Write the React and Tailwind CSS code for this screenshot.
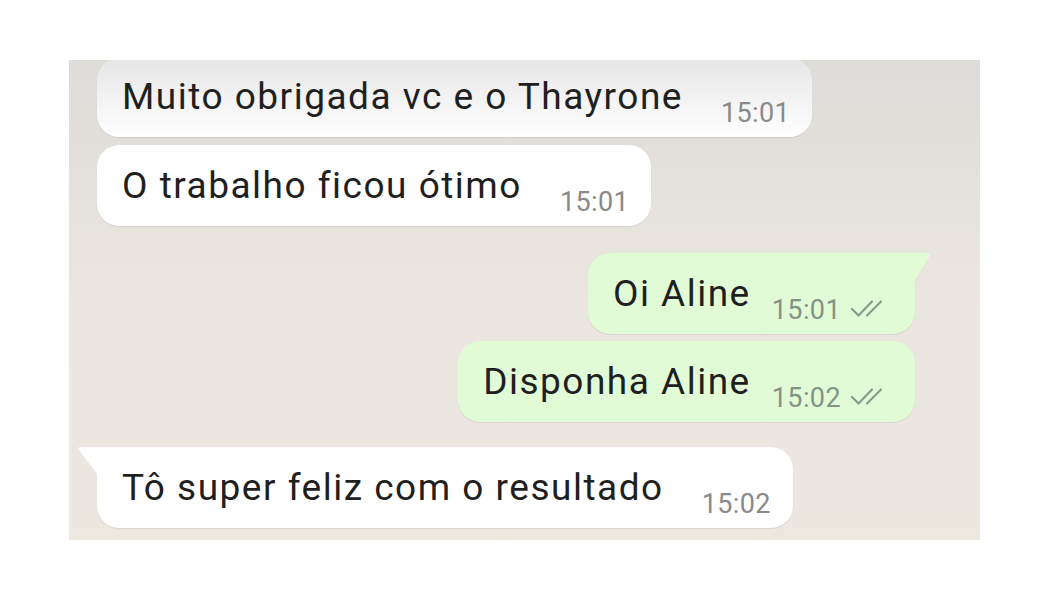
import React from "react";

const messages = [
  { id: 1, text: "Muito obrigada vc e o Thayrone", time: "15:01", out: false, first: true, gap: "-mt-[2px]" },
  { id: 2, text: "O trabalho ficou ótimo", time: "15:01", out: false, gap: "mt-[8px]" },
  { id: 3, text: "Oi Aline", time: "15:01", out: true, tail: true, gap: "mt-[27px]" },
  { id: 4, text: "Disponha Aline", time: "15:02", out: true, gap: "mt-[7px]" },
  { id: 5, text: "Tô super feliz com o resultado", time: "15:02", out: false, tail: true, gap: "mt-[25px]" },
];

function Ticks() {
  return (
    <svg width="40" height="20" viewBox="0 0 40 20" fill="none" className="ml-[9px] mt-[4px]">
      <path d="M2 10 L8.5 16.5 L22 2.5" stroke="#8a998c" strokeWidth="2.2" strokeLinecap="round" strokeLinejoin="round" />
      <path d="M17 16.5 L31 2.5" stroke="#8a998c" strokeWidth="2.2" strokeLinecap="round" />
    </svg>
  );
}

function Bubble({ msg }) {
  if (msg.out) {
    return (
      <div
        className={`relative self-end flex items-start bg-[#e2fbd7] rounded-[22px] pl-[25px] pr-[25px] pt-[21px] pb-[9px] shadow-[0_1px_1px_rgba(0,0,0,0.08)] ${msg.gap} ${
          msg.tail ? "rounded-tr-none" : ""
        }`}
      >
        {msg.tail && (
          <svg width="18" height="30" viewBox="0 0 18 30" className="absolute -right-[17px] top-0">
            <path d="M0 0 H14 Q18 0 15.5 3.5 L0 28 Z" fill="#e2fbd7" />
          </svg>
        )}
        <span className="text-[37px] leading-[40px] tracking-[1.5px] text-[#1f1f1f]">{msg.text}</span>
        <div className="flex items-start mt-[21px] ml-[21px]">
          <span className="text-[27px] leading-[30px] tracking-[0.4px] text-[#849386]">{msg.time}</span>
          <Ticks />
        </div>
      </div>
    );
  }
  return (
    <div
      className={`relative self-start flex items-start rounded-[22px] pl-[25px] pr-[22px] pb-[9px] shadow-[0_1px_1px_rgba(0,0,0,0.08)] ${msg.gap} ${
        msg.first ? "bg-gradient-to-b from-[#e6e6e6] to-white pt-[19px]" : "bg-white pt-[21px]"
      } ${msg.tail ? "rounded-tl-none" : ""}`}
    >
      {msg.tail && (
        <svg width="21" height="30" viewBox="0 0 21 30" className="absolute -left-[20px] top-0">
          <path d="M21 0 H4 Q0 0 2.5 3.5 L21 28 Z" fill="#ffffff" />
        </svg>
      )}
      <span className="text-[37px] leading-[40px] tracking-[1.5px] text-[#1f1f1f]">{msg.text}</span>
      <span className="text-[27px] leading-[30px] tracking-[0.4px] text-[#8a8a8a] mt-[21px] ml-[38px]">{msg.time}</span>
    </div>
  );
}

export default function App() {
  return (
    <div className="w-[1050px] h-[600px] bg-white pt-[60px] pl-[69px]" style={{ fontFamily: "Roboto, 'Noto Sans', sans-serif" }}>
      <div className="w-[911px] h-[480px] overflow-hidden bg-gradient-to-b from-[#dedcd9] via-[#ebe6df] to-[#ece7df] pl-[28px] pr-[65px] flex flex-col">
        {messages.map((m) => (
          <Bubble key={m.id} msg={m} />
        ))}
      </div>
    </div>
  );
}
